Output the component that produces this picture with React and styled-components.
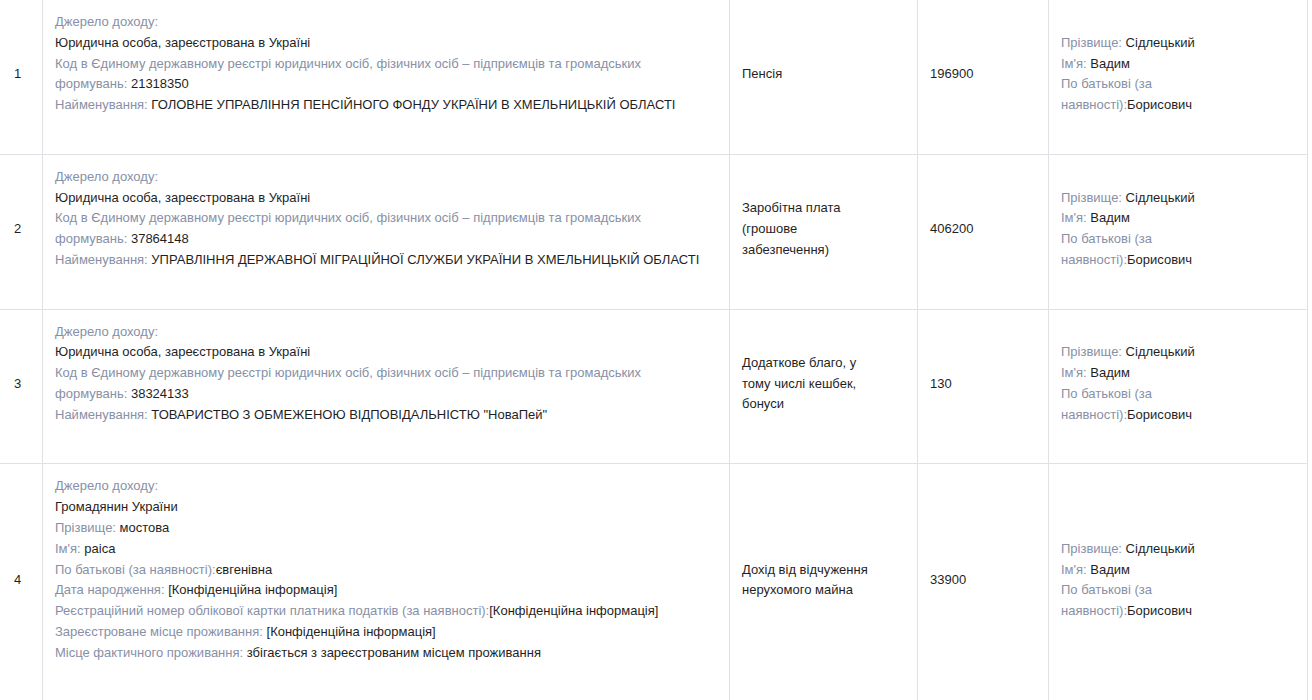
import React from "react";
import styled, { createGlobalStyle } from "styled-components";

const Global = createGlobalStyle`
  html, body { margin: 0; padding: 0; background: #ffffff; }
  body {
    font-family: "Liberation Sans", Arial, sans-serif;
    font-size: 13px;
    color: #1f1f1f;
  }
`;

const Table = styled.div`
  width: 1308px;
  display: flex;
  flex-direction: column;
`;

const Row = styled.div`
  display: grid;
  grid-template-columns: 43px 687px 188px 131px 259px;
`;

const Cell = styled.div`
  box-sizing: border-box;
  border-right: 1px solid #e0e1e7;
  border-bottom: 1px solid #e0e1e7;
  padding: 12px 12px 17px;
  display: flex;
  align-items: center;
  line-height: 20.8px;
  color: #1f1f1f;
`;

const NumberCell = styled(Cell)`
  padding-left: 14px;
`;

const Block = styled.div`
  max-width: ${(p) => p.$max || "none"};
  padding-bottom: ${(p) => (p.$trail ? "20.8px" : "0")};
`;

const Line = styled.div``;

const Label = styled.span`
  color: #8790a6;
`;

const Value = styled.span`
  color: #1f1f1f;
`;

const Field = ({ label, value, tight }) => (
  <Line>
    <Label>{label}</Label>
    {tight ? "" : " "}
    <Value>{value}</Value>
  </Line>
);

const CODE_LABEL =
  "Код в Єдиному державному реєстрі юридичних осіб, фізичних осіб – підприємців та громадських формувань:";

const LegalSource = ({ code, name }) => (
  <Block $trail $max="652px">
    <Line>
      <Label>Джерело доходу:</Label>
    </Line>
    <Line>
      <Value>Юридична особа, зареєстрована в Україні</Value>
    </Line>
    <Field label={CODE_LABEL} value={code} />
    <Field label="Найменування:" value={name} />
  </Block>
);

const PersonSource = () => (
  <Block $trail $max="652px">
    <Line>
      <Label>Джерело доходу:</Label>
    </Line>
    <Line>
      <Value>Громадянин України</Value>
    </Line>
    <Field label="Прізвище:" value="мостова" />
    <Field label="Ім'я:" value="раіса" />
    <Field label="По батькові (за наявності):" value="євгенівна" tight />
    <Field label="Дата народження:" value="[Конфіденційна інформація]" />
    <Field
      label="Реєстраційний номер облікової картки платника податків (за наявності):"
      value="[Конфіденційна інформація]"
      tight
    />
    <Field label="Зареєстроване місце проживання:" value="[Конфіденційна інформація]" />
    <Field
      label="Місце фактичного проживання:"
      value="збігається з зареєстрованим місцем проживання"
    />
  </Block>
);

const Recipient = () => (
  <Block $max="205px">
    <Field label="Прізвище:" value="Сідлецький" />
    <Field label="Ім'я:" value="Вадим" />
    <Field label="По батькові (за наявності):" value="Борисович" tight />
  </Block>
);

const rows = [
  {
    n: 1,
    source: (
      <LegalSource
        code="21318350"
        name="ГОЛОВНЕ УПРАВЛІННЯ ПЕНСІЙНОГО ФОНДУ УКРАЇНИ В ХМЕЛЬНИЦЬКІЙ ОБЛАСТІ"
      />
    ),
    type: "Пенсія",
    amount: "196900",
  },
  {
    n: 2,
    source: (
      <LegalSource
        code="37864148"
        name="УПРАВЛІННЯ ДЕРЖАВНОЇ МІГРАЦІЙНОЇ СЛУЖБИ УКРАЇНИ В ХМЕЛЬНИЦЬКІЙ ОБЛАСТІ"
      />
    ),
    type: "Заробітна плата (грошове забезпечення)",
    amount: "406200",
  },
  {
    n: 3,
    source: (
      <LegalSource
        code="38324133"
        name={'ТОВАРИСТВО З ОБМЕЖЕНОЮ ВІДПОВІДАЛЬНІСТЮ "НоваПей"'}
      />
    ),
    type: "Додаткове благо, у тому числі кешбек, бонуси",
    amount: "130",
  },
  {
    n: 4,
    source: <PersonSource />,
    type: "Дохід від відчуження нерухомого майна",
    amount: "33900",
  },
];

export default function App() {
  return (
    <>
      <Global />
      <Table>
        {rows.map((r) => (
          <Row key={r.n}>
            <NumberCell>{r.n}</NumberCell>
            <Cell>{r.source}</Cell>
            <Cell>
              <Block $max="140px">{r.type}</Block>
            </Cell>
            <Cell>{r.amount}</Cell>
            <Cell>
              <Recipient />
            </Cell>
          </Row>
        ))}
      </Table>
    </>
  );
}
